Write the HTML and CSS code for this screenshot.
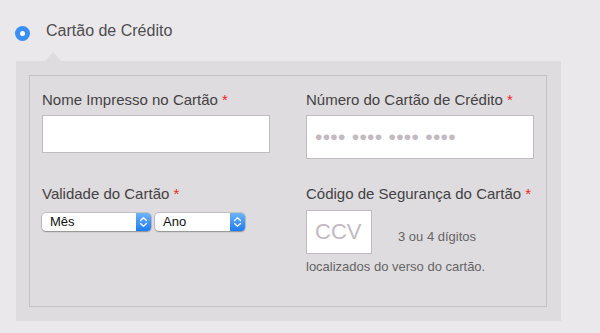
FILE: index.html
```html
<!DOCTYPE html>
<html lang="pt">
<head>
<meta charset="utf-8">
<title>Cartão de Crédito</title>
<link rel="stylesheet" href="styles.css">
</head>
<body>
<div class="option">
  <div class="header">
    <span class="radio"><span class="radio-dot"></span></span>
    <span class="title">Cartão de Crédito</span>
  </div>
  <div class="caret"></div>
  <div class="panel">
    <div class="box">
      <div class="field">
        <label class="label">Nome Impresso no Cartão <span class="req">*</span></label>
        <input class="input input-name" type="text">
      </div>
      <div class="field">
        <label class="label">Número do Cartão de Crédito <span class="req">*</span></label>
        <input class="input input-number" type="text" placeholder="•••• •••• •••• ••••">
      </div>
      <div class="field">
        <label class="label">Validade do Cartão <span class="req">*</span></label>
        <div class="selects">
          <div class="select sel-month"><span class="sel-text">Mês</span><span class="sel-arrow"><svg width="15" height="18" viewBox="0 0 15 18"><path d="M4.5 7.5 L7.5 4.8 L10.5 7.5 M4.5 10.5 L7.5 13.2 L10.5 10.5" fill="none" stroke="#fff" stroke-width="1.3" stroke-linecap="round" stroke-linejoin="round"/></svg></span></div>
          <div class="select sel-year"><span class="sel-text">Ano</span><span class="sel-arrow"><svg width="15" height="18" viewBox="0 0 15 18"><path d="M4.5 7.5 L7.5 4.8 L10.5 7.5 M4.5 10.5 L7.5 13.2 L10.5 10.5" fill="none" stroke="#fff" stroke-width="1.3" stroke-linecap="round" stroke-linejoin="round"/></svg></span></div>
        </div>
      </div>
      <div class="field">
        <label class="label">Código de Segurança do Cartão <span class="req">*</span></label>
        <div class="ccv-row">
          <input class="input input-ccv" type="text" placeholder="CCV">
          <span class="hint">3 ou 4 dígitos</span>
        </div>
        <div class="hint hint-2">localizados do verso do cartão.</div>
      </div>
    </div>
  </div>
</div>
</body>
</html>
```
FILE: styles.css
```css
* { box-sizing: border-box; }
body {
  margin: 0;
  background: #eae8eb;
  font-family: "Liberation Sans", Arial, Helvetica, sans-serif;
}
.option { width: 600px; }
.header {
  display: flex;
  align-items: flex-start;
  padding: 20px 0 0 15px;
  height: 42px;
}
.radio {
  width: 15px;
  height: 15px;
  margin-top: 6px;
  border-radius: 50%;
  background: #3a8ff5;
  display: flex;
  align-items: center;
  justify-content: center;
}
.radio-dot {
  width: 5px;
  height: 5px;
  border-radius: 50%;
  background: #fff;
}
.title {
  margin-left: 16px;
  font-size: 16px;
  line-height: 22px;
  color: #4f4d4f;
}
.caret {
  width: 0;
  height: 0;
  margin: 10px 0 0 45px;
  border-left: 8px solid transparent;
  border-right: 8px solid transparent;
  border-bottom: 9px solid #dedcde;
}
.panel {
  margin-left: 16px;
  width: 545px;
  height: 260px;
  background: #dedcde;
  padding: 14px 14px 14px 13px;
}
.box {
  height: 232px;
  border: 1px solid #c4c2c4;
  padding: 15px 0 0 12px;
  display: grid;
  grid-template-columns: 264px 228px;
  grid-auto-rows: auto;
  row-gap: 26px;
  align-content: start;
}
.field { display: flex; flex-direction: column; align-items: flex-start; }
.label {
  font-size: 15px;
  line-height: 18px;
  color: #444244;
  margin-bottom: 6px;
  white-space: nowrap;
}
.req { color: #f01f1f; }
.input {
  display: block;
  background: #fff;
  border: 1px solid #bebcbe;
  border-radius: 0;
  outline: none;
  font-family: inherit;
  margin: 0;
}
.input-name { width: 228px; height: 38px; }
.input-number {
  width: 228px;
  height: 44px;
  padding: 0 0 0 8px;
  font-size: 21px;
  letter-spacing: 0.3px;
}
.input-number::placeholder { color: #c2bac0; }
.selects { display: flex; gap: 4px; margin-top: 4px; }
.select {
  display: flex;
  height: 18px;
  background: #fff;
  border-radius: 4px;
  box-shadow: 0 0 0 0.5px rgba(0,0,0,0.25), 0 1px 1.5px rgba(0,0,0,0.25);
  overflow: hidden;
}
.sel-month { width: 109px; }
.sel-year { width: 90px; }
.sel-text {
  flex: 1;
  padding-left: 8px;
  font-size: 13px;
  line-height: 18px;
  color: #111;
}
.sel-arrow {
  width: 15px;
  height: 18px;
  background: linear-gradient(#6db4fb, #1b7cf2);
  display: block;
}
.sel-arrow svg { display: block; }
.ccv-row { display: flex; align-items: center; margin-top: 1px; }
.input-ccv {
  width: 66px;
  height: 44px;
  padding: 0 0 0 8px;
  font-size: 22px;
}
.input-ccv::placeholder { color: #c2bac0; }
.hint {
  font-size: 13px;
  line-height: 15px;
  color: #666466;
}
.ccv-row .hint { margin: 8px 0 0 26px; }
.hint-2 { margin-top: 5px; }
```
